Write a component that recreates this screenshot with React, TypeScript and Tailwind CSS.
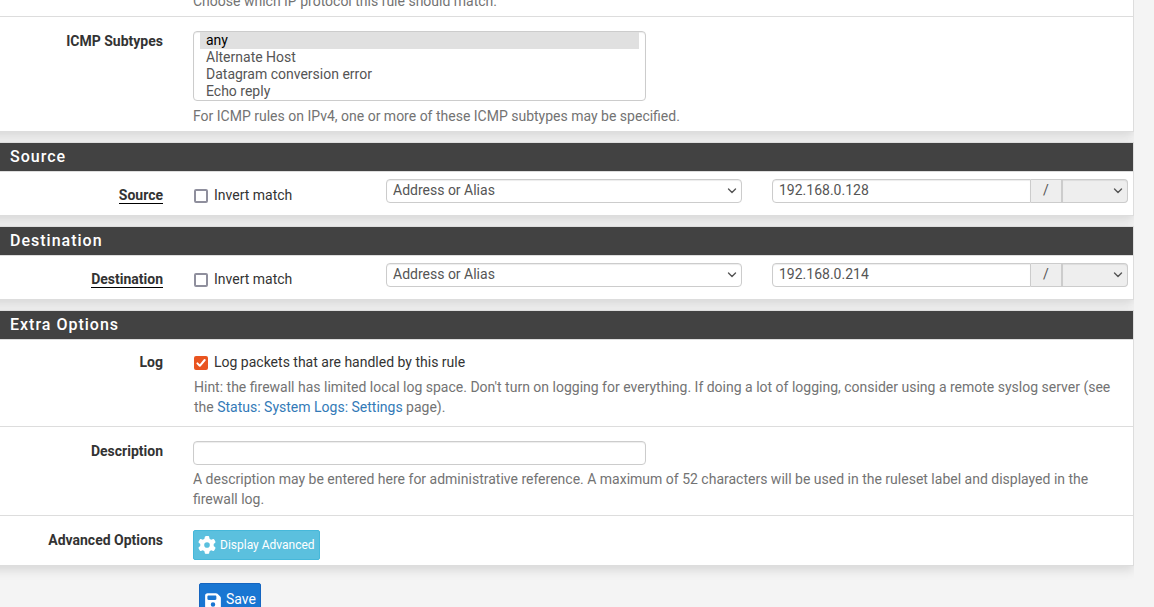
import type { ReactNode } from "react";
import { FaGear, FaFloppyDisk } from "react-icons/fa6";

const controlClass =
  "block h-6 rounded border border-[#ccc] bg-white px-1.5 text-sm leading-5 text-[#555] shadow-[inset_0_1px_1px_rgba(0,0,0,0.075)] outline-none focus:border-[#66afe9]";

function Panel({ title, children }: { title?: string; children: ReactNode }) {
  return (
    <section className="-ml-4 border border-[#ddd] bg-white pl-[15px] shadow-[0_4px_10px_rgba(0,0,0,0.12)] first:border-t-0">
      {title && (
        <h2 className="-ml-[15px] h-[29px] border-b border-[#ddd] bg-[#424242] bg-clip-padding pl-[25px] text-base leading-7 font-medium tracking-[1px] text-white">
          {title}
        </h2>
      )}
      {children}
    </section>
  );
}

function Row({ label, htmlFor, className, children }: { label: string; htmlFor?: string; className: string; children: ReactNode }) {
  return (
    <div className={`grid grid-cols-[163px_minmax(0,1fr)] gap-x-[30px] pr-[5px] ${className}`}>
      <label htmlFor={htmlFor} className="text-right font-bold">
        {label}
      </label>
      <div>{children}</div>
    </div>
  );
}

function Check({ id, label, defaultChecked }: { id: string; label: string; defaultChecked?: boolean }) {
  return (
    <label htmlFor={id} className="flex w-fit items-start gap-1.5 pl-px">
      <span className="relative mt-1 block size-3.5 shrink-0">
        <input
          id={id}
          type="checkbox"
          defaultChecked={defaultChecked}
          className="peer block size-3.5 appearance-none rounded-xs border-2 border-[#8f8f9d] bg-white checked:border-[#e95420] checked:bg-[#e95420]"
        />
        <svg viewBox="0 0 14 14" className="pointer-events-none absolute inset-0 hidden size-3.5 peer-checked:block" fill="none" stroke="#fff" strokeWidth="2" strokeLinecap="round" strokeLinejoin="round">
          <path d="M3.4 7.4 5.8 9.8 10.7 4" />
        </svg>
      </span>
      <span>{label}</span>
    </label>
  );
}

function Chevron() {
  return (
    <svg viewBox="0 0 10 6" className="pointer-events-none absolute top-[9px] right-[5px] h-1.5 w-2.5" fill="none" stroke="#555" strokeWidth="1.4" strokeLinecap="round" strokeLinejoin="round">
      <path d="M1.5 1 5 4.5 8.5 1" />
    </svg>
  );
}

function AddressRow({ id, label, address }: { id: string; label: string; address: string }) {
  return (
    <div className="grid grid-cols-[163px_minmax(0,163fr)_minmax(0,356fr)_minmax(0,356fr)] gap-x-[30px] pt-[7px] pr-[5px] pb-2.5">
      <div className="pt-1.5 text-right font-bold">
        <label htmlFor={`${id}-type`} className="inline-block h-[19px] border-b border-black">
          {label}
        </label>
      </div>
      <div className="pt-1.5">
        <Check id={`${id}-invert`} label="Invert match" />
      </div>
      <div className="relative h-6">
        <select id={`${id}-type`} className={`${controlClass} w-full appearance-none pb-0.5`}>
          <option>Address or Alias</option>
        </select>
        <Chevron />
      </div>
      <div className="flex h-6">
        <input
          aria-label={`${label} address`}
          defaultValue={address}
          className={`${controlClass} min-w-0 flex-1 rounded-r-none pb-0.5`}
        />
        <span className="w-[30px] shrink-0 border-y border-[#ccc] bg-[#eee] text-center text-[#555]">/</span>
        <div className="relative w-[67px] shrink-0">
          <select
            disabled
            aria-label={`${label} mask`}
            className="block h-6 w-full appearance-none rounded-r border border-l-2 border-[#ccc] bg-[#eee] opacity-100 shadow-[inset_0_1px_1px_rgba(0,0,0,0.075)]"
          />
          <Chevron />
        </div>
      </div>
    </div>
  );
}

export default function App() {
  return (
    <div className="min-h-screen bg-[#f4f4f4] font-[Roboto,sans-serif] text-sm leading-5 text-[#333]">
      <form className="mr-5 flex flex-col gap-2.5 overflow-hidden" onSubmit={(e) => e.preventDefault()}>
        <Panel>
          <div className="flex h-4 items-end overflow-hidden pb-[5px] pl-[193px] text-[#737373]">
            Choose which IP protocol this rule should match.
          </div>
          <div className="-ml-[15px] border-t border-[#ddd] pl-[15px]">
            <Row label="ICMP Subtypes" htmlFor="icmp" className="pt-[14px] pb-[5px]">
              <select
                id="icmp"
                multiple
                size={4}
                defaultValue={["any"]}
                className="block h-[70px] w-[453px] max-w-full overflow-hidden rounded border border-[#ccc] bg-white px-1.5 py-0 text-sm text-[#555] shadow-[inset_0_1px_1px_rgba(0,0,0,0.075)] outline-none"
              >
                {["any", "Alternate Host", "Datagram conversion error", "Echo reply"].map((name) => (
                  <option
                    key={name}
                    value={name}
                    className="h-[17px] min-h-[17px] px-1.5 py-0 leading-[17px] checked:bg-[linear-gradient(#e0e0e0,#e0e0e0)] checked:text-black"
                  >
                    {name}
                  </option>
                ))}
              </select>
              <p className="mt-[5px] text-[#737373]">For ICMP rules on IPv4, one or more of these ICMP subtypes may be specified.</p>
            </Row>
          </div>
        </Panel>

        <Panel title="Source">
          <AddressRow id="source" label="Source" address="192.168.0.128" />
        </Panel>

        <Panel title="Destination">
          <AddressRow id="destination" label="Destination" address="192.168.0.214" />
        </Panel>

        <Panel title="Extra Options">
          <Row label="Log" htmlFor="log" className="pt-3 pb-[9px]">
            <Check id="log" label="Log packets that are handled by this rule" defaultChecked />
            <p className="mt-[5px] pl-px text-[#737373]">
              Hint: the firewall has limited local log space. Don't turn on logging for everything. If doing a lot of logging, consider
              using a remote syslog server (see the{" "}
              <a href="#settings" className="text-[#337ab7]">
                Status: System Logs: Settings
              </a>{" "}
              page).
            </p>
          </Row>
          <div className="-ml-[15px] border-t border-[#ddd] pl-[15px]">
            <Row label="Description" htmlFor="descr" className="pt-[14px] pb-1.5">
              <input id="descr" className={`${controlClass} w-[453px] max-w-full`} />
              <p className="mt-1 text-[#737373]">
                A description may be entered here for administrative reference. A maximum of 52 characters will be used in the ruleset
                label and displayed in the firewall log.
              </p>
            </Row>
          </div>
          <div className="-ml-[15px] border-t border-[#ddd] pl-[15px]">
            <Row label="Advanced Options" htmlFor="advanced" className="pt-[14px] pb-[5px]">
              <button
                id="advanced"
                type="button"
                className="flex h-[30px] items-center gap-1 rounded-xs border border-[#46b8da] bg-[#5bc0de] px-1 text-xs text-white"
              >
                <FaGear className="size-[18px]" />
                Display Advanced
              </button>
            </Row>
          </div>
        </Panel>

        <div className="pt-[7px] pl-[199px]">
          <button
            type="submit"
            className="flex h-8 items-center gap-1 rounded-xs border border-[#1565c0] bg-[#1976d2] px-1 text-sm text-white"
          >
            <FaFloppyDisk className="mt-1 size-[18px]" />
            Save
          </button>
        </div>
      </form>
    </div>
  );
}
